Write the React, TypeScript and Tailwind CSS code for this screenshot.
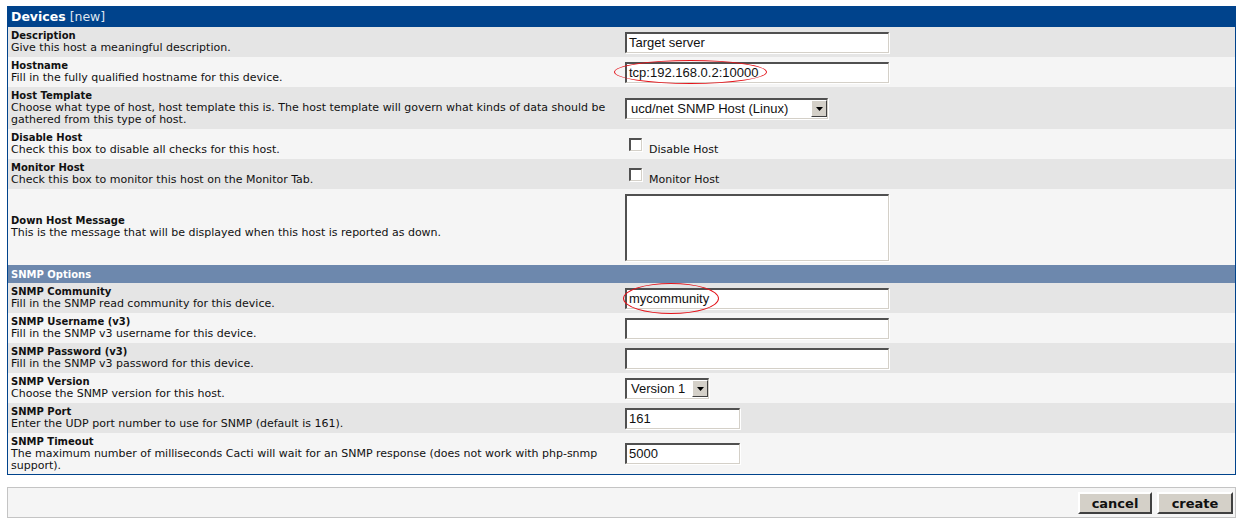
import React from "react";

const V = "font-['Verdana','DejaVu_Sans',sans-serif]";
const INP = "font-['Liberation_Sans',Arial,sans-serif]";

const inset =
  "bg-white border-t-2 border-l-2 border-b border-r border-t-[#505050] border-l-[#505050] border-b-[#d4d0c8] border-r-[#d4d0c8] shadow-[1px_1px_0_#ffffff]";

function TextInput({ value = "", w, children }: { value?: string; w: number; children?: React.ReactNode }) {
  return (
    <div className="relative">
      <div
        className={`${inset} h-[21px] flex items-center pl-[2px] text-[13px] text-[#111] ${INP}`}
        style={{ width: w }}
      >
        {value}
      </div>
      {children}
    </div>
  );
}

function Select({ value, w }: { value: string; w: number }) {
  return (
    <div
      className={`${inset} h-[21px] flex items-center justify-between text-[13px] text-[#111] ${INP}`}
      style={{ width: w }}
    >
      <span className="pl-[4px]">{value}</span>
      <span className="h-[17px] w-[16px] bg-[#d4d0c8] border border-t-white border-l-white border-b-[#404040] border-r-[#404040] flex items-center justify-center">
        <svg width="7" height="4" viewBox="0 0 7 4">
          <polygon points="0,0 7,0 3.5,4" fill="#000" />
        </svg>
      </span>
    </div>
  );
}

function Check({ label }: { label: string }) {
  return (
    <div className="flex items-start pl-[4px] pt-[5px]">
      <span className={`${inset} w-[13px] h-[13px] shrink-0`} />
      <span className={`ml-[7px] mt-[5px] text-[11px] leading-[13px] text-[#111] ${V}`}>{label}</span>
    </div>
  );
}

function Row({
  title,
  desc,
  h,
  dark,
  children,
}: {
  title: string;
  desc: React.ReactNode;
  h: number;
  dark: boolean;
  children?: React.ReactNode;
}) {
  return (
    <div className={`flex ${dark ? "bg-[#e5e5e5]" : "bg-[#f5f5f5]"}`} style={{ height: h }}>
      <div className={`w-[614px] shrink-0 pl-[3px] pr-[4px] flex flex-col justify-center leading-[12px] text-[#111] ${V}`}>
        <div className="font-bold text-[10px]">{title}</div>
        <div className="text-[11px]">{desc}</div>
      </div>
      <div className="flex-1 pl-[3px] flex items-center">{children}</div>
    </div>
  );
}

export default function App() {
  return (
    <div className="bg-white w-[1243px] h-[522px] pt-[6px] px-[7px]">
      <div className="border border-[#00438c]">
        <div className={`h-[20px] bg-[#00438c] flex items-center pl-[3px] text-[12.5px] text-white ${V}`}>
          <span className="font-bold">Devices</span>
          <span className="ml-[4px] text-[#dfe6f0]">[new]</span>
        </div>
        <Row title="Description" desc="Give this host a meaningful description." h={30} dark>
          <TextInput value="Target server" w={264} />
        </Row>
        <Row title="Hostname" desc="Fill in the fully qualified hostname for this device." h={30} dark={false}>
          <TextInput value="tcp:192.168.0.2:10000" w={264}>
            <div className="absolute left-[-11px] top-[-2px] w-[153px] h-[24px] rounded-[50%] border border-[#e4141b]" />
          </TextInput>
        </Row>
        <Row
          title="Host Template"
          desc="Choose what type of host, host template this is. The host template will govern what kinds of data should be gathered from this type of host."
          h={42}
          dark
        >
          <Select value="ucd/net SNMP Host (Linux)" w={203} />
        </Row>
        <Row title="Disable Host" desc="Check this box to disable all checks for this host." h={30} dark={false}>
          <Check label="Disable Host" />
        </Row>
        <Row title="Monitor Host" desc="Check this box to monitor this host on the Monitor Tab." h={30} dark>
          <Check label="Monitor Host" />
        </Row>
        <Row
          title="Down Host Message"
          desc="This is the message that will be displayed when this host is reported as down."
          h={76}
          dark={false}
        >
          <div className={`${inset} w-[264px] h-[67px]`} />
        </Row>
        <div className={`h-[18px] bg-[#6d88ad] flex items-center pl-[3px] text-[10px] font-bold text-white ${V}`}>
          SNMP Options
        </div>
        <Row title="SNMP Community" desc="Fill in the SNMP read community for this device." h={30} dark>
          <TextInput value="mycommunity" w={264}>
            <div className="absolute left-[-2px] top-[-5px] w-[96px] h-[31px] rounded-[50%] border border-[#e4141b]" />
          </TextInput>
        </Row>
        <Row title="SNMP Username (v3)" desc="Fill in the SNMP v3 username for this device." h={30} dark={false}>
          <TextInput w={264} />
        </Row>
        <Row title="SNMP Password (v3)" desc="Fill in the SNMP v3 password for this device." h={30} dark>
          <TextInput w={264} />
        </Row>
        <Row title="SNMP Version" desc="Choose the SNMP version for this host." h={30} dark={false}>
          <Select value="Version 1" w={84} />
        </Row>
        <Row title="SNMP Port" desc="Enter the UDP port number to use for SNMP (default is 161)." h={30} dark>
          <TextInput value="161" w={115} />
        </Row>
        <Row
          title="SNMP Timeout"
          desc="The maximum number of milliseconds Cacti will wait for an SNMP response (does not work with php-snmp support)."
          h={41}
          dark={false}
        >
          <TextInput value="5000" w={115} />
        </Row>
      </div>
      <div className="mt-[12px] h-[31px] border border-[#c4c4c4] bg-[#f5f5f5] flex items-center justify-end pr-[2px] gap-[5px]">
        <button
          className={`w-[74px] h-[22px] bg-[#d4d0c8] border-2 border-t-white border-l-white border-b-[#404040] border-r-[#404040] text-[13px] font-bold text-[#111] ${V}`}
        >
          cancel
        </button>
        <button
          className={`w-[76px] h-[22px] bg-[#d4d0c8] border-2 border-t-white border-l-white border-b-[#404040] border-r-[#404040] text-[13px] font-bold text-[#111] ${V}`}
        >
          create
        </button>
      </div>
    </div>
  );
}
